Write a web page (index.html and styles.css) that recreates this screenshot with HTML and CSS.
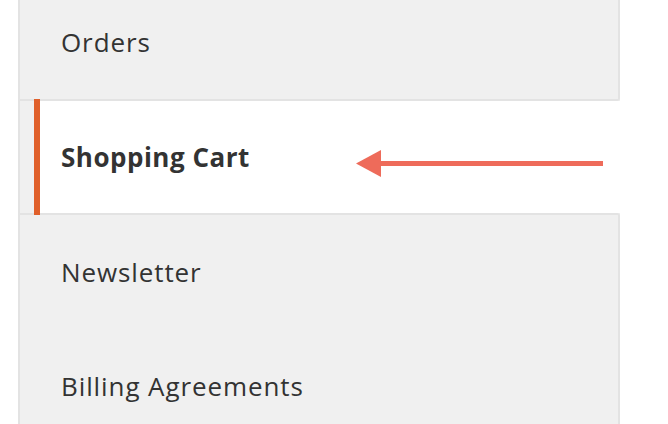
FILE: index.html
```html
<!DOCTYPE html>
<html lang="en">
  <head>
    <meta charset="UTF-8" />
    <meta name="viewport" content="width=device-width, initial-scale=1.0" />
    <title>My Account</title>
    <link rel="stylesheet" href="styles.css">
  </head>
  <body>
    <nav class="account-nav">
      <ul>
        <li class="nav-item first"><a>Orders</a></li>
        <li class="nav-item current">
          <strong>Shopping Cart</strong>
          <svg class="arrow" width="260" height="30" viewBox="0 0 260 30">
            <polygon points="0,13.5 25,0 25,27" fill="#ee6b5a" />
            <rect x="24" y="11" width="223" height="5" fill="#ee6b5a" />
          </svg>
        </li>
        <li class="nav-item after-current"><a>Newsletter</a></li>
        <li class="nav-item"><a>Billing Agreements</a></li>
      </ul>
    </nav>
  </body>
</html>
```

FILE: styles.css
```css
body {
  margin: 0;
  background-color: white;
  font-family: "Open Sans", "Liberation Sans", sans-serif;
  color: #333;
  overflow: hidden;
}
.account-nav {
  margin-left: 18px;
  width: 600px;
  background-color: #f0f0f0;
  border-left: 2px solid #e3e3e3;
}
ul {
  list-style-type: none;
  margin: 0;
  padding: 0;
}
.nav-item {
  display: flex;
  align-items: center;
  height: 114px;
  padding-left: 41px;
  font-size: 26px;
  letter-spacing: 0.9px;
  border-right: 2px solid #e3e3e3;
}
.nav-item a {
  color: #333;
  text-decoration: none;
  cursor: pointer;
}
.first {
  margin-top: -15px;
  border-bottom: 2px solid #e3e3e3;
  border-bottom-right-radius: 3px;
}
.after-current {
  border-top: 2px solid #e3e3e3;
  border-top-right-radius: 3px;
}
.current {
  position: relative;
  margin-left: 14px;
  margin-right: -48px;
  padding-left: 27px;
  background-color: white;
  border-right: none;
  height: 112px;
}
.current::before {
  content: "";
  position: absolute;
  left: 0;
  top: -2px;
  bottom: -2px;
  width: 6px;
  background-color: #e0602b;
}
.current strong {
  font-weight: 700;
  letter-spacing: 0.5px;
}
.arrow {
  position: absolute;
  left: 322px;
  top: 49px;
}
```
